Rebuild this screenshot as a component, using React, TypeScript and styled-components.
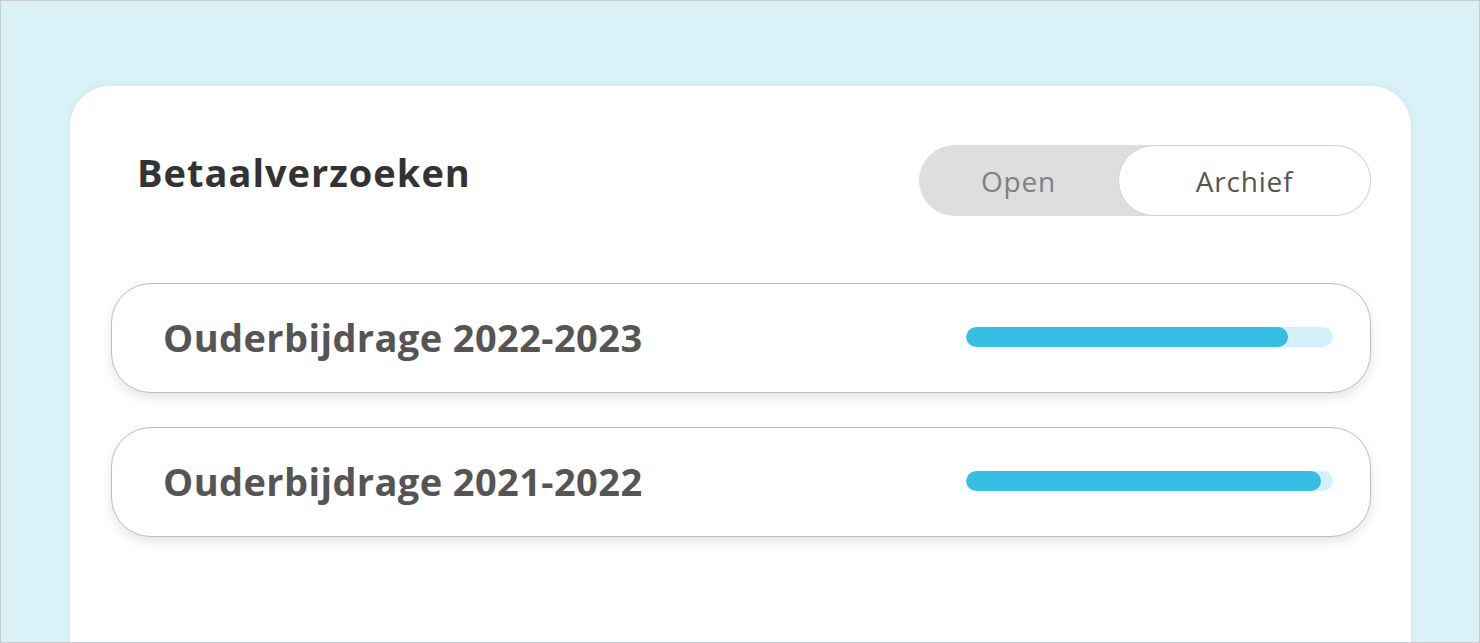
import React from "react";
import styled, { createGlobalStyle } from "styled-components";

interface Verzoek {
  id: number;
  titel: string;
  voortgang: number;
}

const GlobalStyle = createGlobalStyle`
  html, body {
    margin: 0;
    padding: 0;
  }
  body {
    font-family: "Open Sans", "Noto Sans", sans-serif;
  }
`;

const Pagina = styled.div`
  box-sizing: border-box;
  width: 1480px;
  height: 643px;
  border: 1px solid #c9cdd0;
  background-color: #dbf1f8;
  overflow: hidden;
  padding: 85px 0 0 69px;
`;

const Kaart = styled.div`
  box-sizing: border-box;
  width: 1341px;
  min-height: 620px;
  background-color: #ffffff;
  border-radius: 40px 40px 0 0;
  box-shadow: 0 0 10px rgba(0, 0, 0, 0.05);
  padding: 59px 40px 0 41px;
`;

const Kop = styled.div`
  display: flex;
  justify-content: space-between;
  align-items: flex-start;
`;

const Titel = styled.h1`
  margin: 1px 0 0 26px;
  font-size: 38px;
  font-weight: 700;
  color: #333333;
  letter-spacing: 1px;
`;

const Schakelaar = styled.div`
  display: flex;
  width: 452px;
  height: 71px;
  border-radius: 36px;
  background-color: #dedede;
`;

const Knop = styled.button<{ $actief?: boolean }>`
  box-sizing: border-box;
  height: 71px;
  border-radius: 36px;
  font-family: "Open Sans", "Noto Sans", sans-serif;
  font-size: 28px;
  letter-spacing: 0.8px;
  cursor: pointer;
  padding: 0;
  width: ${(p) => (p.$actief ? "253px" : "199px")};
  color: ${(p) => (p.$actief ? "#555555" : "#808080")};
  background-color: ${(p) => (p.$actief ? "#ffffff" : "transparent")};
  border: ${(p) => (p.$actief ? "1px solid #d2d2d2" : "none")};
`;

const Lijst = styled.div`
  display: flex;
  flex-direction: column;
  gap: 34px;
  margin-top: 67px;
`;

const Rij = styled.div`
  box-sizing: border-box;
  display: flex;
  align-items: center;
  justify-content: space-between;
  height: 110px;
  padding: 0 37px 0 51px;
  border: 1px solid #bdbdbd;
  border-radius: 40px;
  background-color: #ffffff;
  box-shadow: 0 5px 12px rgba(0, 0, 0, 0.1);
`;

const RijTitel = styled.span`
  font-size: 38px;
  font-weight: 700;
  color: #555555;
  letter-spacing: 0.4px;
  margin-bottom: 2px;
`;

const Balk = styled.div`
  width: 367px;
  height: 20px;
  border-radius: 10px;
  background-color: #d4f1fa;
  overflow: hidden;
  margin-top: -2px;
`;

const Vulling = styled.div`
  height: 100%;
  border-radius: 10px;
  background-color: #35bde6;
`;

const verzoeken: Verzoek[] = [
  { id: 1, titel: "Ouderbijdrage 2022-2023", voortgang: 87.7 },
  { id: 2, titel: "Ouderbijdrage 2021-2022", voortgang: 96.7 },
];

const App: React.FC = () => {
  return (
    <>
      <GlobalStyle />
      <Pagina>
        <Kaart>
          <Kop>
            <Titel>Betaalverzoeken</Titel>
            <Schakelaar>
              <Knop>Open</Knop>
              <Knop $actief>Archief</Knop>
            </Schakelaar>
          </Kop>
          <Lijst>
            {verzoeken.map((v) => (
              <Rij key={v.id}>
                <RijTitel>{v.titel}</RijTitel>
                <Balk>
                  <Vulling style={{ width: `${v.voortgang}%` }} />
                </Balk>
              </Rij>
            ))}
          </Lijst>
        </Kaart>
      </Pagina>
    </>
  );
};

export default App;
